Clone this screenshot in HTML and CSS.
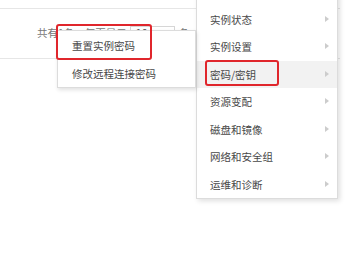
FILE: index.html
```
<!DOCTYPE html>
<html lang="zh-CN">
 <head>
   <title>实例操作菜单</title>
   <meta charset="utf-8"/>
   <link rel="stylesheet" href="styles.css">
 </head>

 <body>
   <div id="wrap">
      <section id="listArea">
         <div class="tableRow"></div>
         <div class="pager">
            <span class="pagerText">共有1条，每页显示</span>
            <span class="pagerSelect">10<i class="selArrow"></i></span>
            <span class="pagerText">条</span>
         </div>
      </section>

      <!-- 更多操作 메뉴 (윗부분은 화면 밖) -->
      <ul class="menu">
         <li class="menuItem">实例状态<i class="arrow"></i></li>
         <li class="menuItem">实例设置<i class="arrow"></i></li>
         <li class="menuItem on">密码/密钥<i class="arrow"></i></li>
         <li class="menuItem">资源变配<i class="arrow"></i></li>
         <li class="menuItem">磁盘和镜像<i class="arrow"></i></li>
         <li class="menuItem">网络和安全组<i class="arrow"></i></li>
         <li class="menuItem">运维和诊断<i class="arrow"></i></li>
      </ul>

      <ul class="subMenu">
         <li class="subItem">重置实例密码</li>
         <li class="subItem">修改远程连接密码</li>
      </ul>

      <div class="mark markSub"></div>
      <div class="mark markMain"></div>
   </div>
 </body>
</html>
```

FILE: styles.css
```
/*####### 초기화 #######*/
   *{margin:0; padding:0; box-sizing:border-box;}
   ul{list-style:none;}

   body{background-color:#fff; color:#484848; font-family:"Noto Sans CJK SC", "Liberation Sans", sans-serif; font-size:10.5px;}
   #wrap{position:relative; width:364px; height:273px; overflow:hidden;}

/*########### listArea ##############*/
   #listArea{width:340px;}
   .tableRow{height:9px; border-bottom:1px solid #e6e6e6;}

   .pager{display:flex; align-items:center; height:50px; padding-left:37px; padding-bottom:2px; border-bottom:1px solid #e6e6e6; color:#777;}
   .pagerSelect{display:inline-flex; align-items:center; gap:4px; width:45px; height:14px; margin:0 4px 0 3px; padding-left:5px; border:1px solid #d6d6d6; color:#555;}
   .selArrow{display:inline-block; width:0; height:0; border-left:3px solid transparent; border-right:3px solid transparent; border-bottom:4px solid #aaa;}

/*######## menu #######*/
   /* 첫 항목은 화면 위로 잘려 있어서 padding-top 으로 자리만 남김 */
   .menu{position:absolute; left:196px; top:-23px; width:142px; padding-top:27.5px; background-color:#fff; border:1px solid #dcdcdc; box-shadow:2px 2px 5px rgba(0,0,0,0.13);}
   .menuItem{position:relative; height:27.5px; line-height:27.5px; padding-left:13px; white-space:nowrap;}
   .menuItem.on{background-color:#f2f2f2;}
   .arrow{position:absolute; right:8px; top:10px; width:0; height:0; border-top:3.5px solid transparent; border-bottom:3.5px solid transparent; border-left:4px solid #ccc;}

   .subMenu{position:absolute; left:57px; top:30px; width:139px; height:58px; padding-top:1px; background-color:#fff; border:1px solid #dcdcdc; box-shadow:1px 2px 4px rgba(0,0,0,0.12);}
   .subItem{height:28px; line-height:28px; padding-left:14px; white-space:nowrap;}

   /*
      [표시 박스]
         스크린샷 위에 그린 빨간 강조 테두리
   */
   .mark{position:absolute; border:2.5px solid #e0262c; border-radius:3px;}
   .markSub{left:56px; top:24px; width:96px; height:36px;}
   .markMain{left:205px; top:60px; width:74px; height:26px;}
```
